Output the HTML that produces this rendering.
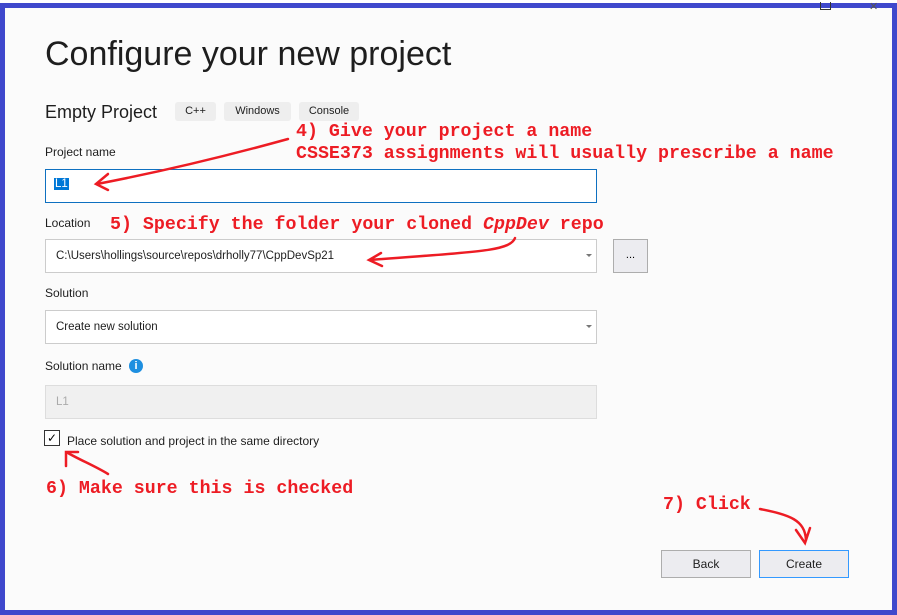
<!DOCTYPE html>
<html><head><style>
body{margin:0;width:897px;height:615px;background:#fff;position:relative;overflow:hidden;font-family:"Liberation Sans",sans-serif;}
.frame{position:absolute;left:0;top:3px;width:887px;height:602px;border:5px solid #3f48cc;background:#fbfbfb;}
.a{position:absolute;}
.lbl{position:absolute;left:45px;font-size:12px;color:#1e1e1e;}
.box{position:absolute;left:45px;width:550px;height:32px;border:1px solid #ccc;background:#fff;font-size:11.5px;color:#1e1e1e;}
.box span{position:absolute;left:10px;top:10px;}
.dd{position:absolute;right:4px;top:14px;width:0;height:0;border-left:3px solid transparent;border-right:3px solid transparent;border-top:3px solid #777;}
.red{position:absolute;color:#ed1c24;font-family:"Liberation Mono",monospace;font-weight:bold;font-size:18.3px;white-space:pre;}
.tag{position:absolute;top:102px;height:19px;background:#eeeeee;border-radius:3px;font-size:11px;color:#1e1e1e;text-align:center;line-height:19px;}
.btn{position:absolute;top:550px;width:88px;height:26px;background:#ececf0;border:1px solid #adadad;font-size:12px;text-align:center;line-height:26px;color:#1e1e1e;}
</style></head><body>
<div class="frame"></div>
<div class="a" style="left:820px;top:2px;width:9px;height:7px;border:1px solid #333;border-top:none;"></div>
<div class="a" style="left:869px;top:0px;font-size:11px;color:#555;">✕</div>
<div class="a" style="left:45px;top:35px;font-size:34px;color:#1e1e1e;">Configure your new project</div>
<div class="a" style="left:45px;top:102px;font-size:18px;color:#1e1e1e;">Empty Project</div>
<div class="tag" style="left:175px;width:41px;">C++</div>
<div class="tag" style="left:224px;width:67px;">Windows</div>
<div class="tag" style="left:299px;width:60px;">Console</div>
<div class="lbl" style="top:145px;">Project name</div>
<div class="box" style="top:169px;border-color:#0e70c0;"><span style="top:8px;left:8px;background:#0078d7;color:#fff;padding:0 1px;">L1</span></div>
<div class="lbl" style="top:216px;">Location</div>
<div class="box" style="top:239px;"><span>C:\Users\hollings\source\repos\drholly77\CppDevSp21</span><div class="dd"></div></div>
<div class="a" style="left:613px;top:239px;width:33px;height:32px;border:1px solid #adadad;background:#ececf0;font-size:11px;text-align:center;line-height:30px;">...</div>
<div class="lbl" style="top:286px;">Solution</div>
<div class="box" style="top:310px;"><span>Create new solution</span><div class="dd"></div></div>
<div class="lbl" style="top:359px;">Solution name</div>
<div class="a" style="left:129px;top:359px;width:14px;height:14px;border-radius:50%;background:#1e8fe0;color:#fff;font-size:11px;font-weight:bold;text-align:center;line-height:14px;">i</div>
<div class="box" style="top:385px;background:#f0f0f0;border-color:#ddd;"><span style="color:#aaa;">L1</span></div>
<div class="a" style="left:44px;top:430px;width:14px;height:14px;border:1px solid #333;background:#fff;font-size:12px;text-align:center;line-height:14px;">✓</div>
<div class="lbl" style="left:67px;top:434px;">Place solution and project in the same directory</div>
<div class="btn" style="left:661px;">Back</div>
<div class="btn" style="left:759px;border-color:#3399ff;">Create</div>
<div class="red" style="left:296px;top:122px;">4) Give your project a name</div>
<div class="red" style="left:296px;top:144px;">CSSE373 assignments will usually prescribe a name</div>
<div class="red" style="left:110px;top:215px;">5) Specify the folder your cloned <i>CppDev</i> repo</div>
<div class="red" style="left:46px;top:479px;">6) Make sure this is checked</div>
<div class="red" style="left:663px;top:495px;">7) Click</div>
<svg class="a" style="left:0;top:0" width="897" height="615" fill="none" stroke="#ed1c24" stroke-width="2.5" stroke-linecap="round">
<path d="M288 139 C230 155 170 170 97 184"/><path d="M108 174 L96 184 L108 190"/>
<path d="M515 238 C510 252 470 252 370 260"/><path d="M381 253 L369 260 L382 266"/>
<path d="M108 474 C95 466 80 460 68 453"/><path d="M66 466 L66 452 L78 452"/>
<path d="M760 509 C790 515 805 520 806 540"/><path d="M796 530 L805 543 L810 528"/>
</svg>
</body></html>
